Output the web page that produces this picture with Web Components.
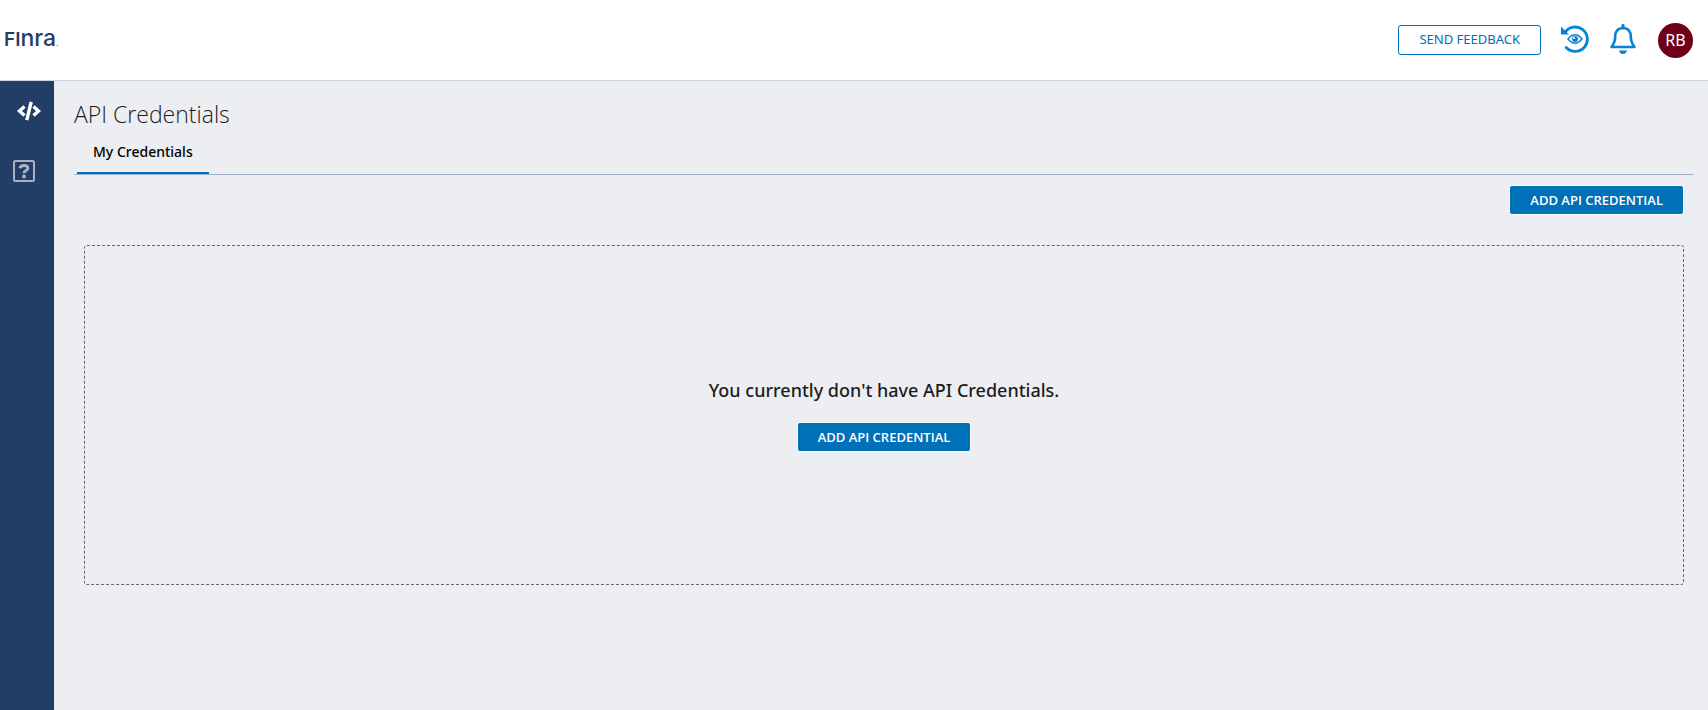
<!DOCTYPE html>
<html lang="en">
<head>
<meta charset="utf-8">
<meta name="viewport" content="width=device-width, initial-scale=1">
<title>API Credentials</title>
<style>
body { margin: 0; font-family: "Noto Sans", "Open Sans", sans-serif; color: #1c1c1e; background: #edeef2; }
</style>
</head>
<body>
<api-console>
  <top-bar slot="header"></top-bar>
  <side-nav slot="nav"></side-nav>
  <page-heading>API Credentials</page-heading>
  <tab-bar>My Credentials</tab-bar>
  <action-row><solid-button>ADD API CREDENTIAL</solid-button></action-row>
  <empty-state>
    You currently don't have API Credentials.
    <solid-button slot="action">ADD API CREDENTIAL</solid-button>
  </empty-state>
</api-console>
<script>
const define = (name, html) => {
  const template = document.createElement('template');
  template.innerHTML = html;
  customElements.define(name, class extends HTMLElement {
    constructor() {
      super();
      this.attachShadow({ mode: 'open' }).append(template.content.cloneNode(true));
    }
  });
};

define('api-console', `
<style>
  :host { display: flex; flex-direction: column; min-height: 100vh; }
  .body { display: flex; flex: 1; }
  main { flex: 1; min-width: 0; padding: 20px 14px 20px 20px; }
</style>
<slot name="header"></slot>
<div class="body"><slot name="nav"></slot><main><slot></slot></main></div>`);

define('brand-logo', `
<style>
  :host { display: block; color: #233e66; font-family: Inter, sans-serif; line-height: 32px; white-space: nowrap; }
  a { color: inherit; text-decoration: none; }
  .caps { font-size: 19px; font-weight: 600; }
  .small { font-size: 23px; font-weight: 500; }
  .dot { font-size: 8px; }
</style>
<a href="#" aria-label="FINRA home"><span class="caps">FI</span><span class="small">nra</span><span class="dot">.</span></a>`);

define('top-bar', `
<style>
  :host { display: block; }
  header { display: flex; align-items: center; justify-content: space-between; height: 80px; padding: 0 15px 0 4px; background: #fff; border-bottom: 1px solid #cfd5de; }
  .tools { display: flex; align-items: center; }
  button { font: inherit; cursor: pointer; }
  .feedback { height: 30px; padding: 0 20px 2px; font-size: 13px; color: #0070b8; background: #fff; border: 1px solid #0070b8; border-radius: 3px; }
  .icon { display: flex; padding: 0 0 3px; border: 0; background: none; color: #0a84d2; }
  .history { margin-left: 20px; }
  .bell { margin-left: 20px; }
  .avatar { width: 35px; height: 35px; margin-left: 21px; padding: 0; border: 0; border-radius: 50%; background: #70001a; color: #fff; font-size: 16px; }
</style>
<header>
  <brand-logo></brand-logo>
  <div class="tools">
    <button class="feedback">SEND FEEDBACK</button>
    <button class="icon history" aria-label="Recently viewed">
      <svg width="28" height="30" viewBox="0 0 28 30" fill="none" stroke="currentColor">
        <path d="M4 8.500A12.200 12.200 0 1 1 5.200 23.500" stroke-width="2.800" stroke-linecap="round"/>
        <path d="M0 2.500V10.500H8Z" fill="currentColor" stroke="none"/>
        <path d="M7 15Q14 6.600 21 15Q14 23.400 7 15Z" stroke-width="1.600"/>
        <circle cx="14" cy="15" r="3" fill="currentColor" stroke="none"/>
        <circle cx="13" cy="14" r="1.100" fill="#fff" stroke="none"/>
      </svg>
    </button>
    <button class="icon bell" aria-label="Notifications">
      <svg width="28" height="34" viewBox="0 0 28 34">
        <path d="M14 6C8.800 6 6.200 9.600 6.200 14.500C6.200 19.500 5.200 21.500 2.500 25H25.500C22.800 21.500 21.800 19.500 21.800 14.500C21.800 9.600 19.200 6 14 6Z" fill="none" stroke="currentColor" stroke-width="2.600" stroke-linejoin="round"/>
        <path d="M14 3.200V6" stroke="currentColor" stroke-width="3" stroke-linecap="round"/>
        <path d="M10 28.500H18Q17.200 32 14 32T10 28.500Z" fill="currentColor"/>
      </svg>
    </button>
    <button class="avatar" aria-label="Account RB">RB</button>
  </div>
</header>`);

define('side-nav', `
<style>
  :host { display: block; width: 54px; background: #233e66; }
  nav { display: flex; flex-direction: column; gap: 36px; padding: 18px 0 0 12px; }
  a { display: flex; height: 24px; color: #fff; }
  a + a { color: #a7b2c6; }
</style>
<nav>
  <a href="#" aria-label="API"><svg width="34" height="24" viewBox="0 0 34 24" fill="none" stroke="currentColor" stroke-width="3.400"><path d="M12.500 7.500 7.500 12 12.500 16.500M21.500 7.500 26.500 12 21.500 16.500M19.200 2.800 14.800 21.200"/></svg></a>
  <a href="#" aria-label="Help"><svg width="24" height="24" viewBox="0 0 24 24" fill="none" stroke="currentColor"><rect x="2" y="2" width="20" height="20" rx="1.500" stroke-width="2"/><path d="M8 9.300C8.300 7.200 10 6.400 12 6.400C14.400 6.400 15.800 7.500 15.800 9.300C15.800 11.700 12 11.500 12 14.200" stroke-width="3"/><circle cx="12" cy="17.400" r="2" fill="currentColor" stroke="none"/></svg></a>
</nav>`);

define('page-heading', `
<style>
  :host { display: block; }
  h1 { margin: 0; font: 300 23px/26px "Open Sans", "Noto Sans", sans-serif; }
</style>
<h1><slot></slot></h1>`);

define('tab-bar', `
<style>
  :host { display: block; border-bottom: 1px solid #a0aec4; }
  nav { display: flex; padding-left: 3px; }
  button { height: 47px; padding: 4px 16px 0; border: 0; border-bottom: 2px solid #0070b8; background: none; font: 500 14px/20px "Noto Sans", "Open Sans", sans-serif; color: #000; display: flex; align-items: center; }
</style>
<nav role="tablist"><button role="tab" aria-selected="true"><slot></slot></button></nav>`);

define('action-row', `
<style>:host { display: flex; justify-content: flex-end; padding: 10px 10px 30px; }</style>
<slot></slot>`);

define('solid-button', `
<style>
  :host { display: block; }
  button { display: block; height: 30px; padding: 0 20px; border: 1px solid #fff; border-radius: 3px; background: #0070b8; color: #fff; font: 600 13px/20px "Open Sans", "Noto Sans", sans-serif; cursor: pointer; }
</style>
<button><slot></slot></button>`);

define('empty-state', `
<style>
  :host { display: flex; flex-direction: column; align-items: center; justify-content: center; gap: 20px; box-sizing: border-box; min-height: 340px; margin: 0 10px; padding: 0 20px; border: 1px dashed #66686c; border-radius: 3px; }
  p { margin: 0; font-size: 18px; line-height: 24px; font-weight: 500; }
</style>
<p><slot></slot></p>
<slot name="action"></slot>`);
</script>
</body>
</html>
